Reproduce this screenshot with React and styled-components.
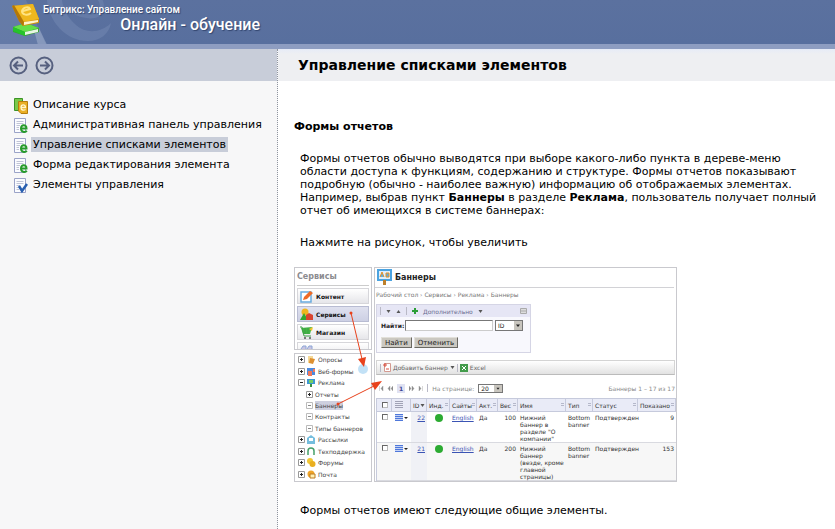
import React from 'react';
import styled, { createGlobalStyle } from 'styled-components';

const GlobalStyle = createGlobalStyle`
    * {
        box-sizing: border-box;
    }

    body {
        margin: 0;
        background: #fff;
        color: #000;
        font-family: 'DejaVu Sans', Verdana, sans-serif;
        font-size: 11px;
        line-height: 13px;
    }

    h1, h2, h3, p, ul, figure {
        margin: 0;
        padding: 0;
    }

    ul {
        list-style: none;
    }

    button, input, select {
        font: inherit;
        color: inherit;
        margin: 0;
        padding: 0;
    }
`;

const Page = styled.div`
    display: flex;
    flex-direction: column;
    min-height: 100vh;
`;

const Header = styled.header`
    display: grid;
    height: 49px;
    overflow: hidden;
    background: linear-gradient(#5b719f, #586f9e);
    border-bottom: 5px solid #8e9dc1;
    color: #fff;

    > * {
        grid-area: 1 / 1;
    }
`;

const Brand = styled.div`
    display: flex;
    width: 260px;
    font-family: Roboto, 'Open Sans', sans-serif;
    font-weight: 500;
    text-shadow: 1px 1px 1px #33466f;

    > svg {
        flex: none;
        margin: 3px 4px 0 11px;
    }
`;

const BrandText = styled.div`
    display: flex;
    flex: 1;
    flex-direction: column;
    padding-top: 3px;
    font-size: 10px;
    line-height: 14px;
    white-space: nowrap;

    strong {
        align-self: flex-end;
        font-size: 16px;
        line-height: 16px;
        font-weight: 500;
    }
`;

const Columns = styled.div`
    display: flex;
    flex: 1;
`;

const Sidebar = styled.aside`
    flex: none;
    width: 278px;
    background: #f7f7f8;
    border-right: 1px dotted #8f949f;
`;

const NavBar = styled.div`
    display: flex;
    align-items: center;
    gap: 7px;
    height: 32px;
    padding-left: 9px;
    background: #c8cdd9;
`;

const RoundButton = styled.button`
    display: flex;
    border: 0;
    background: none;
`;

const Contents = styled.ul`
    padding: 13px 0 0 14px;
`;

const Lesson = styled.li`
    display: flex;
    gap: 3px;
    height: 20px;

    svg {
        flex: none;
        margin-top: 4px;
    }
`;

const LessonLink = styled.a`
    align-self: flex-start;
    margin-top: 3px;
    padding: 1px 2px;
    background: ${({ $current }) => ($current ? '#c8cdd9' : 'none')};
    color: #000;
    text-decoration: none;
    white-space: nowrap;
`;

const Main = styled.main`
    flex: 1;
    min-width: 0;
`;

const TitleBar = styled.div`
    display: flex;
    align-items: center;
    height: 32px;
    padding-left: 20px;
    background: linear-gradient(#e6ebf7, #eeeff2 5px);

    h1 {
        font-size: 14px;
        font-weight: bold;
    }
`;

const Article = styled.article`
    padding: 39px 4px 0 16px;

    h2 {
        font-size: 11px;
    }
`;

const Paragraph = styled.p`
    margin: ${({ $top }) => $top}px 0 0 6px;
`;

/* Preview of the admin panel */

const Preview = styled.figure`
    position: relative;
    display: grid;
    grid-template-columns: 78px 303px;
    gap: 2px;
    width: 383px;
    height: 215px;
    margin-top: 18px;
    font-size: 6px;
    line-height: 7px;
    color: #444;
    overflow: hidden;
`;

const Arrows = styled.svg`
    position: absolute;
    inset: 0;
    pointer-events: none;
`;

const SideColumn = styled.div`
    display: grid;
    grid-template-rows: 83px 129px;
    gap: 3px;
`;

const Panel = styled.div`
    display: flex;
    flex-direction: column;
    min-width: 0;
    overflow: hidden;
    border: 1px solid #c9c9ce;
    background: #fff;
`;

const MenuTitle = styled.div`
    margin: 0 2px 2px;
    padding: 4px 0;
    border-bottom: 1px solid #ccc;
    font-size: 8px;
    line-height: 9px;
    font-weight: bold;
    color: #8b8b8f;
`;

const MenuButton = styled.button`
    display: flex;
    flex: none;
    align-items: center;
    gap: 3px;
    height: 16px;
    margin: 0 2px 2px;
    padding-left: 2px;
    border: 1px solid ${({ $active }) => ($active ? '#b8bcd2' : '#d6d6da')};
    background: ${({ $active }) => ($active ? 'linear-gradient(#dfe1ef, #cdd0e4)' : 'linear-gradient(#fff, #e6e6ea)')};
    font-weight: bold;
    color: #111;
`;

const Tree = styled.ul`
    display: flex;
    flex: 1;
    flex-direction: column;
    padding: 0 0 1px 3px;
`;

const TreeRow = styled.li`
    display: flex;
    flex: 1;
    align-items: center;
    gap: 2px;
    padding-left: ${({ $nested }) => ($nested ? 8 : 0)}px;

    span {
        padding: 1px 0;
        background: ${({ $selected }) => ($selected ? '#ced0df' : 'none')};
        white-space: nowrap;
    }
`;

const PanelHead = styled.div`
    display: flex;
    align-items: center;
    gap: 3px;
    height: 20px;
    margin-right: 2px;
    padding-left: 2px;
    border-bottom: 1px solid #d2d2d6;

    h3 {
        font-size: 8px;
        color: #222;
    }
`;

const PanelBody = styled.div`
    display: flex;
    flex: 1;
    flex-direction: column;
    padding-left: 1px;

    > * {
        flex: none;
    }
`;

const Crumbs = styled.div`
    padding: 3px 0 6px;
    color: #777;
    white-space: nowrap;
`;

const Filter = styled.form`
    display: flex;
    flex-direction: column;
    width: 155px;
    height: 49px;
    border: 1px solid #d5d5e5;
    background: #f8f8fd;
`;

const FilterBar = styled.div`
    display: flex;
    align-items: center;
    gap: 5px;
    height: 12px;
    padding: 0 3px;
    background: #e6e6f5;
    color: #6b6e91;

    svg:last-child {
        margin-left: auto;
    }
`;

const FilterRow = styled.div`
    display: flex;
    align-items: center;
    gap: 2px;
    padding: ${({ $top }) => $top}px 0 0 4px;

    label {
        width: 22px;
        font-weight: bold;
        color: #222;
    }

    input {
        width: 88px;
        height: 11px;
        border: 1px solid;
        border-color: #777 #ccc #ccc #777;
        background: #fff;
    }
`;

const SmallSelect = styled.span`
    display: flex;
    width: ${({ $width }) => $width}px;
    height: ${({ $height }) => $height}px;
    border: 1px solid #777;
    background: #fff;

    select {
        flex: 1;
        min-width: 0;
        padding-left: 2px;
        border: 0;
        background: none;
        appearance: none;
        color: #222;
    }

    svg {
        flex: none;
        align-self: stretch;
        height: auto;
        background: #c8c5be;
    }
`;

const PushButton = styled.button`
    height: 11px;
    padding: 0 3px;
    border: 1px solid;
    border-color: #e2e0da #6a6862 #6a6862 #e2e0da;
    background: #cbc8c1;
    font-size: 7px;
    line-height: 8px;
    color: #222;
`;

const Toolbar = styled.div`
    display: flex;
    align-items: center;
    gap: 2px;
    height: 15px;
    margin: 7px 1px 0 0;
    padding-left: 3px;
    border: 1px solid #d4d4d4;
    border-bottom-color: #bbb;
    background: linear-gradient(#fff, #e2e2e2);
    color: #666;
    white-space: nowrap;
`;

const Pager = styled.div`
    display: flex;
    align-items: center;
    gap: 4px;
    height: 23px;
    padding: 3px 1px 0 3px;
    color: #888;
    white-space: nowrap;

    b {
        padding: 1px 2px;
        background: #e0e2f2;
        color: #3d4793;
    }

    > :last-child {
        margin-left: auto;
    }
`;

const Divider = styled.i`
    width: 1px;
    height: 8px;
    background: #b9b9c6;
`;

const Banners = styled.table`
    width: 300px;
    table-layout: fixed;
    border-collapse: separate;
    border-spacing: 0;
    border-top: 1px solid #c6cadc;
    border-left: 1px solid #c6cadc;
    color: #333;

    th {
        height: 13px;
        padding: 0 1px 0 2px;
        border-right: 1px solid #c6cadc;
        border-bottom: 1px solid #c6cadc;
        background: #e9ebf7;
        font-weight: normal;
        white-space: nowrap;
    }

    td {
        padding: 2px 2px 0;
        border-bottom: 1px solid #d9dae0;
        vertical-align: top;
    }

    tbody tr:nth-child(2) {
        background: #f7f7f7;
    }

    td:nth-child(3) {
        background: #f0f1f6;
    }

    a {
        color: #3b54b4;
    }

    input {
        display: block;
        width: 6px;
        height: 6px;
        margin: 0 auto;
        border: 1px solid;
        border-color: #666 #bbb #bbb #666;
        background: #fff;
        appearance: none;
    }

    svg {
        display: block;
    }
`;

const HeadCell = styled.div`
    display: flex;
    align-items: center;
    justify-content: space-between;

    svg {
        flex: none;
    }
`;

const Cell = styled.td`
    text-align: ${({ $right }) => ($right ? 'right' : 'left')};
`;

const Watermark = () => (
    <svg width="150" height="49" viewBox="0 0 150 49">
        <path d="M0 0H26L48 49H0Z" fill="#8295bd" opacity=".3" />
        <path d="M34 30L39 28L49 49H39Z" fill="#c5d0e6" opacity=".35" />
        <path
            d="M47 0C49 22 66 41 88 41C100 41 109 34 111 23C101 33 86 34 76 25C67 17 63 9 62 0Z"
            fill="#8094bd"
            opacity=".35"
        />
        <path d="M68 7C78 17 97 20 101 11C103 5 101 0 98 -3" fill="none" stroke="#8094bd" strokeWidth="4" opacity=".3" />
    </svg>
);

const BooksIcon = () => (
    <svg width="28" height="34" viewBox="0 0 28 34">
        <path d="M2 24L15 20L28 25V29L14 33L2 29Z" fill="#35a432" />
        <path d="M2 24L15 20L28 25L14 29Z" fill="#64df48" />
        <path d="M14 29L27 26V29L14 32Z" fill="#e8f5e2" />
        <path d="M2 24L14 29V33L2 28Z" fill="#25c42a" />
        <path d="M1 3L22 1L28 16V20L12 23L8 18Z" fill="#cf9210" />
        <path d="M1 3L22 1L28 16L12 19Z" fill="#efb71e" />
        <path d="M1 3L3 2L13 19L12 23L8 18Z" fill="#b37708" />
        <path d="M13 19L27 17V19L13 22Z" fill="#fff4cb" />
        <path d="M12 8L19 6C18 3 12 4 11 8C11 12 17 13 20 10" fill="none" stroke="#ffe382" strokeWidth="2" />
    </svg>
);

const CircleArrow = ({ back }) => (
    <svg width="19" height="19" viewBox="0 0 19 19" fill="none" stroke="#56607f">
        <circle cx="9.5" cy="9.5" r="8" strokeWidth="2" />
        <path d={back ? 'M14 9.5H6M9 5.5L5 9.5L9 13.5' : 'M5 9.5H13M10 5.5L14 9.5L10 13.5'} strokeWidth="2" />
    </svg>
);

const CourseIcon = () => (
    <svg width="14" height="16" viewBox="0 0 14 16">
        <path d="M.5 .5H8.500V12.500H.5Z" fill="#7cc94a" stroke="#3b9427" />
        <path d="M4.500 3.500H13.500V15.500H7L4.500 13Z" fill="#e9ae25" stroke="#b57d0c" />
        <path d="M7 9.500H11.500C11.500 6 7 6 7 9.500C7 12.500 10 12.500 11.500 11.500" fill="none" stroke="#fff6cc" strokeWidth="1.300" />
    </svg>
);

const PageIcon = ({ test }) => (
    <svg width="14" height="16" viewBox="0 0 14 16">
        <path d="M.5 .5H11.500V14.500H.5Z" fill="#fbfcff" stroke="#9ba3c8" />
        <path d="M2.500 3.500H9.500M2.500 5.500H9.500M2.500 7.500H6M2.500 9.500H5M2.500 11.500H5" stroke="#c0c4d6" />
        {test ? (
            <path d="M5 8L8 13L13 6" fill="none" stroke="#285fb0" strokeWidth="2.500" />
        ) : (
            <path d="M7 10.500H12.500C12.500 6 7 6.500 7 10.500C7 14.500 11 14.500 13 13" fill="none" stroke="#279b2b" strokeWidth="2" />
        )}
    </svg>
);

const MenuIcon = ({ kind }) => (
    <svg width="13" height="13" viewBox="0 0 13 13">
        {kind === 'edit' && (
            <>
                <path d="M1 2H11V12H1Z" fill="#fff" stroke="#6aacdf" strokeWidth="1.500" />
                <path d="M3 10L4 7L10 1L13 3L7 9Z" fill="#ee6a26" />
            </>
        )}
        {kind === 'shapes' && (
            <>
                <circle cx="5" cy="4" r="3.500" fill="#f0b51f" />
                <path d="M0 12L4 5L8 12Z" fill="#34a632" />
                <path d="M6 7L9 5L13 7V12H6Z" fill="#d94430" />
            </>
        )}
        {kind === 'cart' && (
            <>
                <path d="M1 2L12 1L10 8H3Z" fill="#42b644" />
                <path d="M0 1H2L4 10H11M5 2V8M8 2V8" fill="none" stroke="#3fa046" />
                <path d="M9 3L13 1L12 5Z" fill="#f2c22f" />
                <circle cx="5" cy="12" r="1" fill="#555" />
                <circle cx="10" cy="12" r="1" fill="#555" />
            </>
        )}
        {kind === 'reports' && <path d="M1 5L3 2H6V6M7 5L9 2H12V6" fill="#c8c4e2" stroke="#8da6d6" />}
    </svg>
);

const Expander = ({ open, leaf }) => (
    <svg width="7" height="7" viewBox="0 0 7 7" fill="none">
        <path d="M.5 .5H6.500V6.500H.5Z" stroke={leaf ? '#bbb' : '#999'} fill="#fff" />
        <path d={open ? 'M2 3.500H5' : 'M2 3.500H5M3.500 2V5'} stroke={leaf ? '#888' : '#222'} />
    </svg>
);

const treeShapes = {
    poll: <><path d="M1 1H6V8H1Z" fill="#f4d999" /><path d="M3 3L8 4L6 9L2 8Z" fill="#dd9030" /></>,
    form: <><path d="M0 1H8V8H0Z" fill="#4c8ade" /><path d="M1 4H5V9H1ZM6 2H8V5H6Z" fill="#f0785b" /></>,
    ads: <><path d="M0 1H8V6H0Z" fill="#3d97d2" /><path d="M2 2H6V5H2Z" fill="#75cf65" /><path d="M3 6H5V9H3Z" fill="#38933f" /></>,
    mail: <><path d="M0 3L4 0L8 3V9H0Z" fill="#75bede" /><path d="M2 3H6V6H2Z" fill="#fff" /></>,
    support: <path d="M1 8V4C1 0 7 0 7 4V8" fill="none" stroke="#45a06a" strokeWidth="1.500" />,
    forum: <><circle cx="3" cy="3" r="3" fill="#f2c632" /><circle cx="5.500" cy="6" r="3" fill="#e9af20" /></>,
    post: <><circle cx="4" cy="4" r="3.500" fill="#efa529" /><path d="M3 4H8V8H3Z" fill="#fff1b5" stroke="#bd7b20" /></>,
};

const TreeIcon = ({ kind }) => (
    <svg width="9" height="9" viewBox="0 0 9 9">{treeShapes[kind]}</svg>
);

const BannerIcon = () => (
    <svg width="15" height="17" viewBox="0 0 15 17">
        <path d="M1 1H14V11H1Z" fill="#dff0fc" stroke="#4ba3e0" strokeWidth="2" />
        <path d="M3 8L5 3L7 8M9 4H12V8H9Z" stroke="#e99123" fill="#5aaee2" />
        <path d="M6 11H9V16H6Z" fill="#bd802b" />
    </svg>
);

const Caret = ({ up }) => (
    <svg width="5" height="3" viewBox="0 0 5 3"><path d={up ? 'M.5 3H4.500L2.500 0Z' : 'M.5 0H4.500L2.500 3Z'} fill="#555" /></svg>
);

const SelectArrow = () => (
    <svg width="8" height="9" viewBox="0 0 8 9"><path d="M2 3.500H6L4 6Z" fill="#222" /></svg>
);

const Lines = ({ muted, caret }) => (
    <svg width="14" height="8" viewBox="0 0 14 8">
        {!muted && <path d="M1 0H9V7H1Z" fill="#c4d2f5" />}
        <path d="M1 .5H9M1 2.500H9M1 4.500H9M1 6.500H9" stroke={muted ? '#a0a2b5' : '#4f78da'} />
        {caret && <path d="M10 3H14L12 5Z" fill="#222" />}
    </svg>
);

const Sort = () => (
    <svg width="3" height="4" viewBox="0 0 3 4"><path d="M0 .5H3M0 2.500H3" stroke="#b5b8ca" /></svg>
);

const lessons = [
    { title: 'Описание курса', icon: <CourseIcon /> },
    { title: 'Административная панель управления', icon: <PageIcon /> },
    { title: 'Управление списками элементов', icon: <PageIcon />, current: true },
    { title: 'Форма редактирования элемента', icon: <PageIcon /> },
    { title: 'Элементы управления', icon: <PageIcon test /> },
];

const tree = [
    { title: 'Опросы', kind: 'poll' },
    { title: 'Веб-формы', kind: 'form' },
    { title: 'Реклама', kind: 'ads', open: true },
    { title: 'Отчеты', nested: true },
    { title: 'Баннеры', nested: true, leaf: true, selected: true },
    { title: 'Контракты', nested: true, leaf: true },
    { title: 'Типы баннеров', nested: true, leaf: true },
    { title: 'Рассылки', kind: 'mail' },
    { title: 'Техподдержка', kind: 'support' },
    { title: 'Форумы', kind: 'forum' },
    { title: 'Почта', kind: 'post' },
];

const widths = [15, 19, 16, 23, 27, 21, 20, 48, 27, 45, 38];
const heads = ['Инд.', 'Сайты', 'Акт.', 'Вес', 'Имя', 'Тип', 'Статус', 'Показано'];

const banners = [
    { id: 22, weight: 100, name: 'Нижний баннер в разделе "О компании"', shown: 9 },
    { id: 21, weight: 200, name: 'Нижний баннер (везде, кроме главной страницы)', shown: 153 },
];

const AdminPreview = () => (
    <Preview>
        <SideColumn>
            <Panel>
                <MenuTitle>Сервисы</MenuTitle>
                <MenuButton><MenuIcon kind="edit" />Контент</MenuButton>
                <MenuButton $active><MenuIcon kind="shapes" />Сервисы</MenuButton>
                <MenuButton><MenuIcon kind="cart" />Магазин</MenuButton>
                <MenuButton aria-label="Аналитика"><MenuIcon kind="reports" /></MenuButton>
            </Panel>
            <Panel>
                <Tree>
                    {tree.map(({ title, kind, nested, leaf, open, selected }) => (
                        <TreeRow key={title} $nested={nested} $selected={selected}>
                            <Expander open={open || leaf} leaf={leaf} />
                            {kind && <TreeIcon kind={kind} />}
                            <span>{title}</span>
                        </TreeRow>
                    ))}
                </Tree>
            </Panel>
        </SideColumn>
        <Panel>
            <PanelHead>
                <BannerIcon />
                <h3>Баннеры</h3>
            </PanelHead>
            <PanelBody>
                <Crumbs>Рабочий стол › Сервисы › Реклама › Баннеры</Crumbs>
                <Filter onSubmit={(e) => e.preventDefault()}>
                    <FilterBar>
                        <Divider />
                        <Caret />
                        <Caret up />
                        <Divider />
                        <svg width="6" height="6" viewBox="0 0 6 6"><path d="M3 0V6M0 3H6" stroke="#2c9e37" strokeWidth="2" /></svg>
                        Дополнительно
                        <Caret />
                        <svg width="7" height="6" viewBox="0 0 7 6"><path d="M.5 .5H6.500V5.500H.5ZM1 3H6" fill="#ddd" stroke="#aaa" /></svg>
                    </FilterBar>
                    <FilterRow $top={3}>
                        <label htmlFor="find">Найти:</label>
                        <input id="find" type="text" />
                        <SmallSelect $width={28} $height={11}>
                            <select aria-label="Поле"><option>ID</option></select>
                            <SelectArrow />
                        </SmallSelect>
                    </FilterRow>
                    <FilterRow $top={6}>
                        <PushButton>Найти</PushButton>
                        <PushButton type="button">Отменить</PushButton>
                    </FilterRow>
                </Filter>
                <Toolbar>
                    <Divider />
                    <svg width="8" height="9" viewBox="0 0 8 9"><path d="M1.500 .5H7.500V8.500H1.500Z" fill="#fff" stroke="#d39a91" /><path d="M0 2H4M2 0V4M3 6H6" stroke="#da5040" /></svg>
                    Добавить баннер
                    <Caret />
                    <Divider />
                    <svg width="8" height="8" viewBox="0 0 8 8"><path d="M0 0H8V8H0Z" fill="#429b4a" /><path d="M2 2L6 6M6 2L2 6" stroke="#fff" /></svg>
                    Excel
                </Toolbar>
                <Pager>
                    <svg width="14" height="5" viewBox="0 0 14 5"><path d="M.5 0V5M4 0L2 2.500L4 5ZM11 0L9 2.500L11 5ZM14 0L12 2.500L14 5Z" fill="#888" stroke="#999" strokeWidth=".4" /></svg>
                    <b>1</b>
                    <svg width="14" height="5" viewBox="0 0 14 5"><path d="M0 0L2 2.500L0 5ZM3 0L5 2.500L3 5ZM10 0L12 2.500L10 5ZM13.500 0V5" fill="#888" stroke="#999" strokeWidth=".4" /></svg>
                    <Divider />
                    <label htmlFor="size">На странице:</label>
                    <SmallSelect $width={25} $height={9}>
                        <select id="size"><option>20</option></select>
                        <SelectArrow />
                    </SmallSelect>
                    <span>Баннеры 1 – 17 из 17</span>
                </Pager>
                <Banners>
                    <colgroup>{widths.map((w, i) => <col key={i} width={w} />)}</colgroup>
                    <thead>
                        <tr>
                            <th><input type="checkbox" aria-label="Выбрать все" /></th>
                            <th><Lines muted /></th>
                            <th><HeadCell>ID<Caret /></HeadCell></th>
                            {heads.map((title) => (
                                <th key={title}><HeadCell>{title}<Sort /></HeadCell></th>
                            ))}
                        </tr>
                    </thead>
                    <tbody>
                        {banners.map(({ id, weight, name, shown }) => (
                            <tr key={id}>
                                <td><input type="checkbox" aria-label={`Баннер ${id}`} /></td>
                                <td><Lines caret /></td>
                                <Cell $right><a href="#banner">{id}</a></Cell>
                                <td><svg width="16" height="8" viewBox="0 0 16 8"><circle cx="10" cy="4" r="4" fill="#2cab32" /></svg></td>
                                <td><a href="#site">English</a></td>
                                <td>Да</td>
                                <Cell $right>{weight}</Cell>
                                <td>{name}</td>
                                <td>Bottom banner</td>
                                <td>Подтвержден</td>
                                <Cell $right>{shown}</Cell>
                            </tr>
                        ))}
                    </tbody>
                </Banners>
            </PanelBody>
        </Panel>
        <Arrows width="383" height="215" viewBox="0 0 383 215">
            <circle cx="69" cy="102" r="5" fill="#a8d4f2" opacity=".7" />
            <path d="M57 46L68 92M44 137L80 119" stroke="#e8421c" />
            <path d="M70 100L64 92L72 90ZM88 114L81 123L77 116Z" fill="#e8421c" />
            <circle cx="57" cy="46" r="1.500" fill="#e8421c" />
            <circle cx="44" cy="137" r="1.500" fill="#e8421c" />
        </Arrows>
    </Preview>
);

const App = () => (
    <>
        <GlobalStyle />
        <Page>
            <Header>
                <Watermark />
                <Brand>
                    <BooksIcon />
                    <BrandText>
                        <span>Битрикс: Управление сайтом</span>
                        <strong>Онлайн - обучение</strong>
                    </BrandText>
                </Brand>
            </Header>
            <Columns>
                <Sidebar>
                    <NavBar>
                        <RoundButton aria-label="Назад"><CircleArrow back /></RoundButton>
                        <RoundButton aria-label="Вперед"><CircleArrow /></RoundButton>
                    </NavBar>
                    <Contents>
                        {lessons.map(({ title, icon, current }) => (
                            <Lesson key={title}>
                                {icon}
                                <LessonLink href="#lesson" $current={current}>{title}</LessonLink>
                            </Lesson>
                        ))}
                    </Contents>
                </Sidebar>
                <Main>
                    <TitleBar>
                        <h1>Управление списками элементов</h1>
                    </TitleBar>
                    <Article>
                        <h2>Формы отчетов</h2>
                        <Paragraph $top={19}>
                            Формы отчетов обычно выводятся при выборе какого-либо пункта в дереве-меню области доступа к
                            функциям, содержанию и структуре. Формы отчетов показывают подробную (обычно - наиболее важную)
                            информацию об отображаемых элементах. Например, выбрав пункт <b>Баннеры</b> в разделе{' '}
                            <b>Реклама</b>, пользователь получает полный отчет об имеющихся в системе баннерах:
                        </Paragraph>
                        <Paragraph $top={19}>Нажмите на рисунок, чтобы увеличить</Paragraph>
                        <AdminPreview />
                        <Paragraph $top={22}>Формы отчетов имеют следующие общие элементы.</Paragraph>
                    </Article>
                </Main>
            </Columns>
        </Page>
    </>
);

export default App;
